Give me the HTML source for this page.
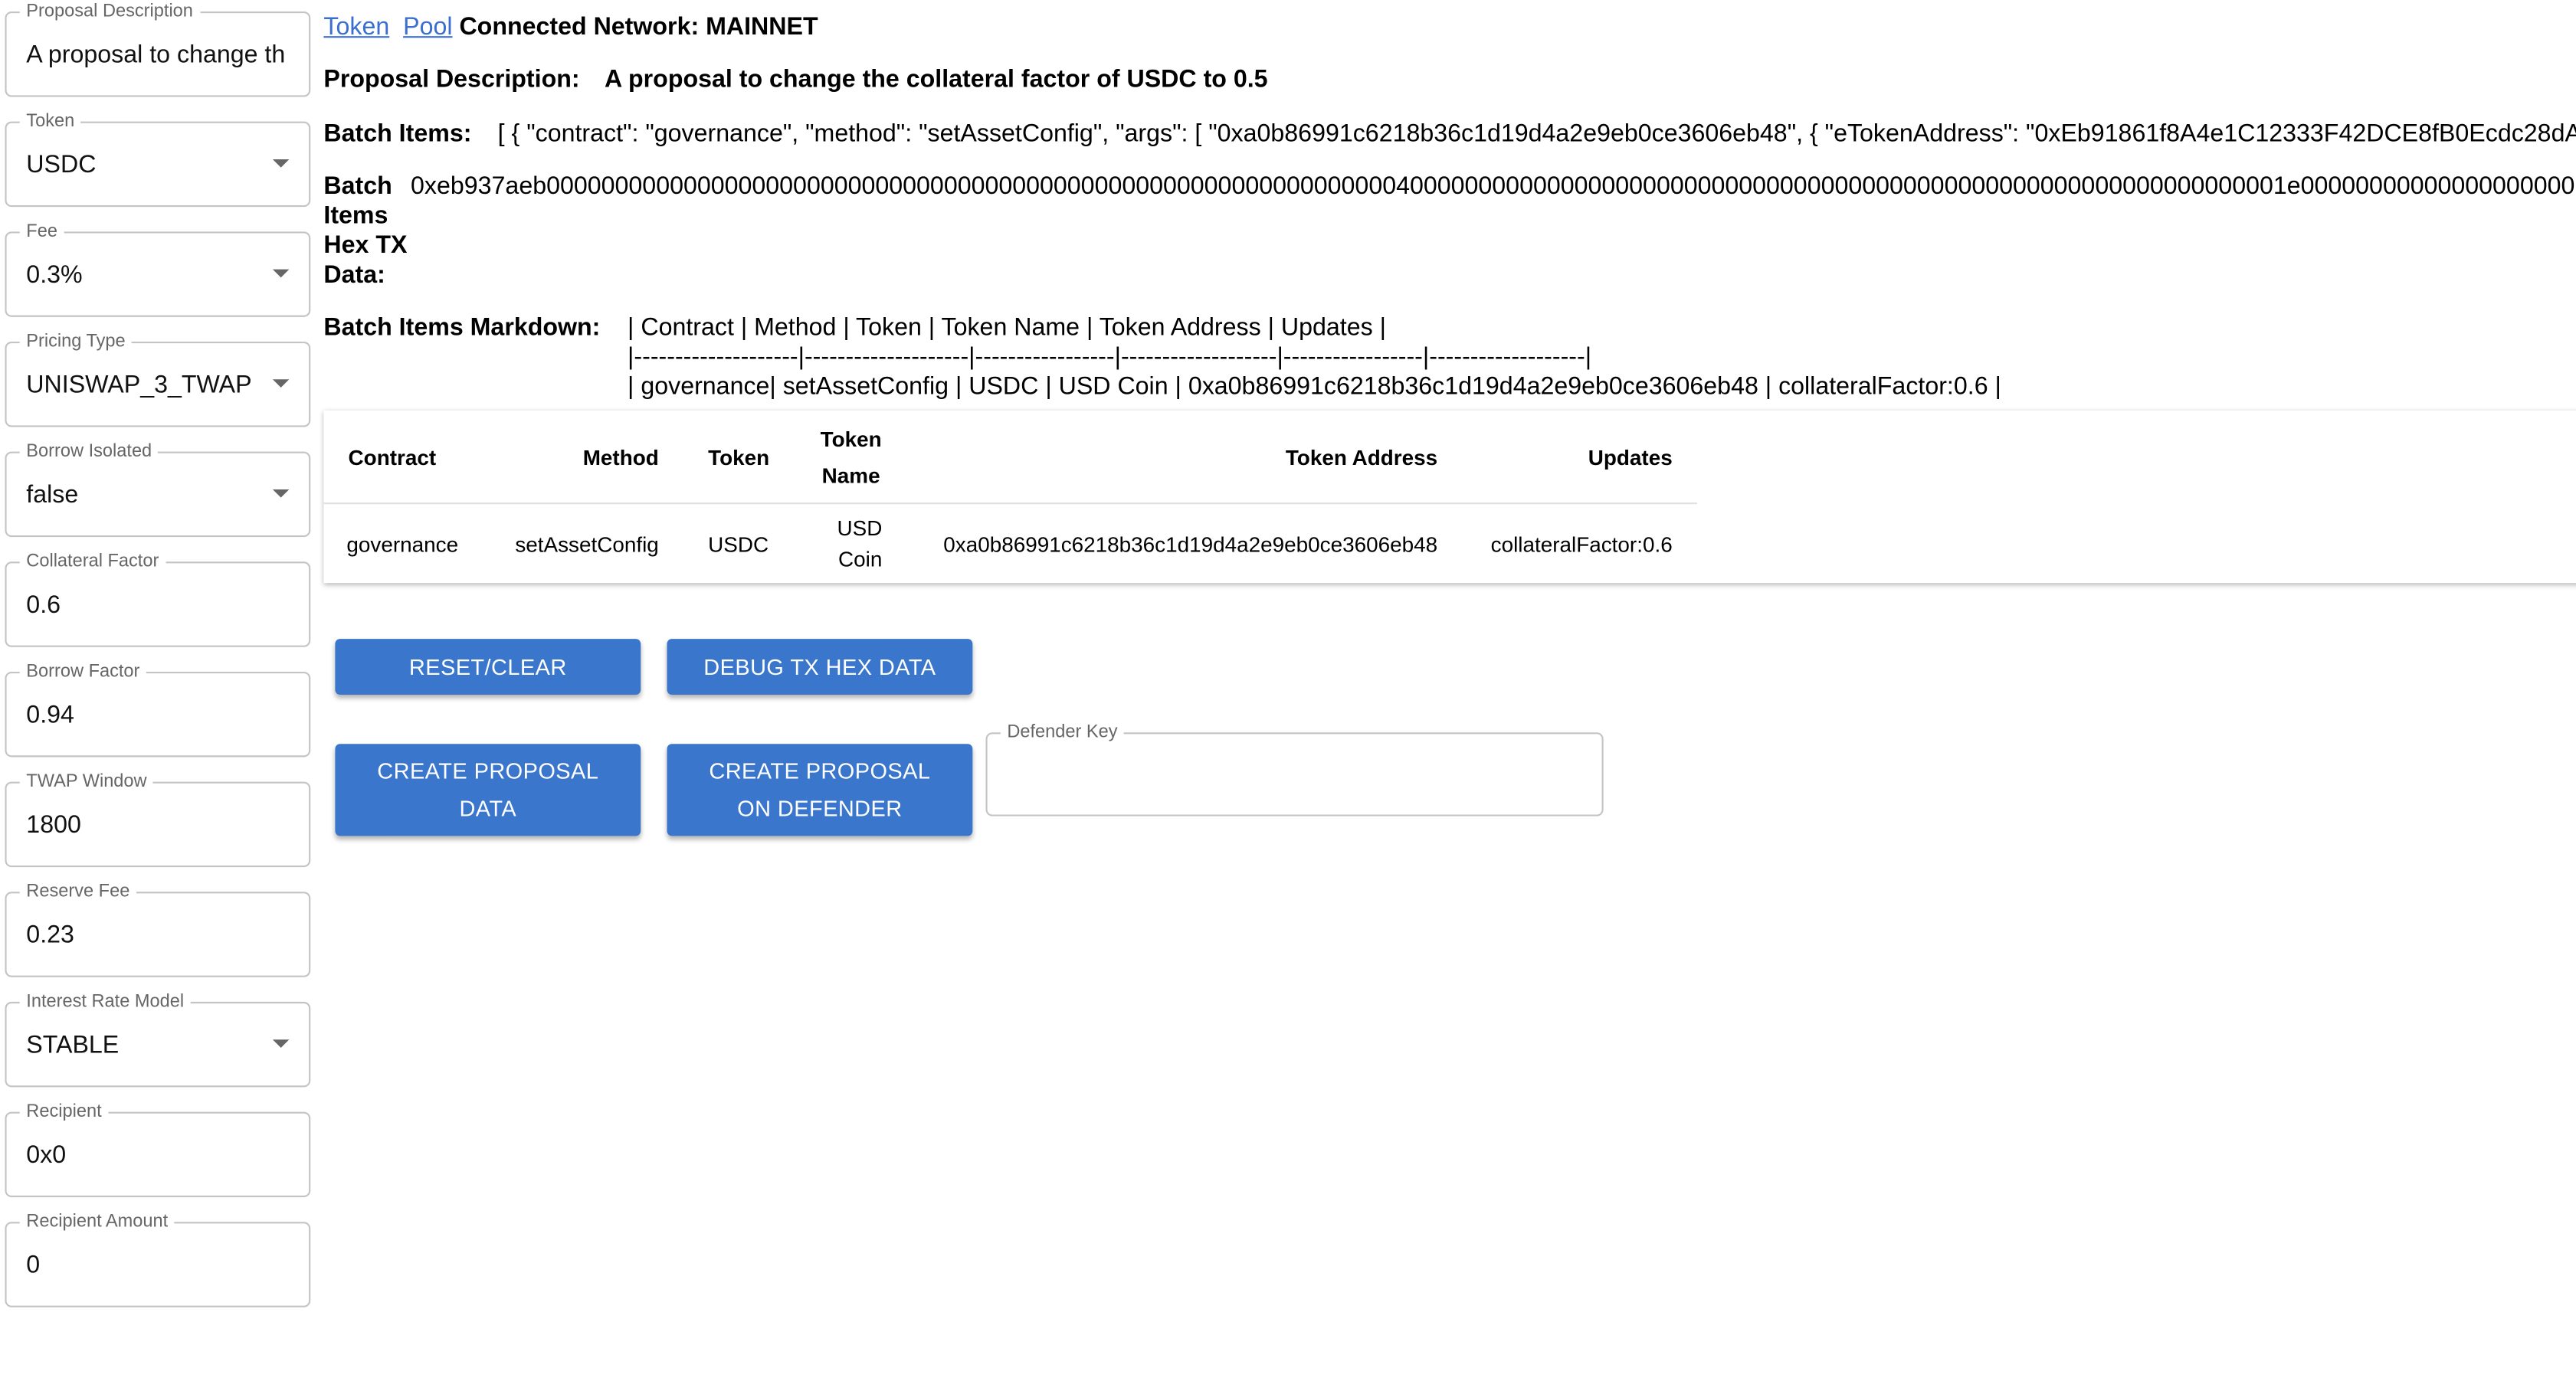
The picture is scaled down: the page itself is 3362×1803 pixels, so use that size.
<!DOCTYPE html>
<html><head><meta charset="utf-8"><style>
html,body{margin:0;padding:0;background:#fff;overflow:hidden;width:3362px;height:1802px}
#w{position:absolute;left:0;top:0;width:1568px;height:841px;transform:scale(2.14413);transform-origin:0 0;font-family:"Liberation Sans",Arial,sans-serif;color:#000;overflow:hidden}
.f{position:absolute;left:3px;width:184px;height:50px;border:1px solid #c4c4c4;border-radius:4px}
.f .l{position:absolute;left:8px;top:-8px;background:#fff;padding:0 4px;font-size:11px;color:#666;line-height:14px;white-space:nowrap}
.f .v{position:absolute;left:12px;top:17px;font-size:15px;color:#111;white-space:nowrap;overflow:hidden;width:164px}
.f .a{position:absolute;right:12px;top:22px;width:0;height:0;border-left:5px solid transparent;border-right:5px solid transparent;border-top:5px solid #666}
.t{position:absolute;white-space:nowrap;font-size:15px;line-height:18px}
b{font-weight:bold}
a{color:#3a6fd0;text-decoration:underline}
.tbl{position:absolute;left:197px;top:250px;width:1380px;height:105px;box-shadow:0 1px 3px rgba(0,0,0,.3);background:#fff;font-size:13px}
.c{position:absolute;white-space:nowrap;line-height:22px}
.btn{position:absolute;background:#3a76cc;color:#fff;font-size:13.5px;text-align:center;border-radius:3px;box-shadow:0 2px 3px rgba(0,0,0,.3);letter-spacing:.2px;line-height:23px;display:flex;align-items:center;justify-content:center;flex-direction:column}
</style></head><body><div id="w">
<div class="f" style="top:7px"><span class="l">Proposal Description</span><span class="v">A proposal to change th</span></div>
<div class="f" style="top:74px"><span class="l">Token</span><span class="v">USDC</span><i class="a"></i></div>
<div class="f" style="top:141px"><span class="l">Fee</span><span class="v">0.3%</span><i class="a"></i></div>
<div class="f" style="top:208px"><span class="l">Pricing Type</span><span class="v">UNISWAP_3_TWAP</span><i class="a"></i></div>
<div class="f" style="top:275px"><span class="l">Borrow Isolated</span><span class="v">false</span><i class="a"></i></div>
<div class="f" style="top:342px"><span class="l">Collateral Factor</span><span class="v">0.6</span></div>
<div class="f" style="top:409px"><span class="l">Borrow Factor</span><span class="v">0.94</span></div>
<div class="f" style="top:476px"><span class="l">TWAP Window</span><span class="v">1800</span></div>
<div class="f" style="top:543px"><span class="l">Reserve Fee</span><span class="v">0.23</span></div>
<div class="f" style="top:610px"><span class="l">Interest Rate Model</span><span class="v">STABLE</span><i class="a"></i></div>
<div class="f" style="top:677px"><span class="l">Recipient</span><span class="v">0x0</span></div>
<div class="f" style="top:744px"><span class="l">Recipient Amount</span><span class="v">0</span></div>

<div class="t" style="left:197px;top:8px"><a>Token</a>&nbsp; <a>Pool</a> <b>Connected Network: MAINNET</b></div>
<div class="t" style="left:197px;top:40px"><b>Proposal Description:</b></div>
<div class="t" style="left:368px;top:40px"><b>A proposal to change the collateral factor of USDC to 0.5</b></div>
<div class="t" style="left:197px;top:73px"><b>Batch Items:</b></div>
<div class="t" style="left:303px;top:73px">[ { "contract": "governance", "method": "setAssetConfig", "args": [ "0xa0b86991c6218b36c1d19d4a2e9eb0ce3606eb48", { "eTokenAddress": "0xEb91861f8A4e1C12333F42DCE8fB0Ecdc28dA716" } ] } ]</div>
<div class="t" style="left:197px;top:105px;white-space:normal;width:52px"><b>Batch Items Hex TX Data:</b></div>
<div class="t" style="left:250px;top:105px">0xeb937aeb0000000000000000000000000000000000000000000000000000000000000040000000000000000000000000000000000000000000000000000000000000001e00000000000000000000</div>
<div class="t" style="left:197px;top:191px"><b>Batch Items Markdown:</b></div>
<div class="t" style="left:382px;top:191px">| Contract | Method | Token | Token Name | Token Address | Updates |<br>|--------------------|--------------------|-----------------|-------------------|-----------------|-------------------|<br>| governance| setAssetConfig | USDC | USD Coin | 0xa0b86991c6218b36c1d19d4a2e9eb0ce3606eb48 | collateralFactor:0.6 |</div>

<div class="tbl">
<div style="position:absolute;left:0;top:56px;width:836px;height:1px;background:#e0e0e0"></div>
<b class="c" style="left:15px;top:18px">Contract</b>
<b class="c" style="right:1176px;top:18px">Method</b>
<b class="c" style="left:234px;top:18px">Token</b>
<b class="c" style="left:300px;top:7px;width:42px;text-align:center;white-space:normal">Token Name</b>
<b class="c" style="right:702px;top:18px">Token Address</b>
<b class="c" style="right:559px;top:18px">Updates</b>
<span class="c" style="left:14px;top:71px">governance</span>
<span class="c" style="right:1176px;top:71px">setAssetConfig</span>
<span class="c" style="left:234px;top:71px">USDC</span>
<span class="c" style="right:1040px;top:62px;text-align:right;line-height:19px">USD<br>Coin</span>
<span class="c" style="right:702px;top:71px">0xa0b86991c6218b36c1d19d4a2e9eb0ce3606eb48</span>
<span class="c" style="right:559px;top:71px">collateralFactor:0.6</span>
</div>

<div class="btn" style="left:204px;top:389px;width:186px;height:34px">RESET/CLEAR</div>
<div class="btn" style="left:406px;top:389px;width:186px;height:34px">DEBUG TX HEX DATA</div>
<div class="btn" style="left:204px;top:453px;width:186px;height:56px">CREATE PROPOSAL<br>DATA</div>
<div class="btn" style="left:406px;top:453px;width:186px;height:56px">CREATE PROPOSAL<br>ON DEFENDER</div>
<div class="f" style="left:600px;top:446px;width:374px;height:49px"><span class="l">Defender Key</span></div>
</div></body></html>
